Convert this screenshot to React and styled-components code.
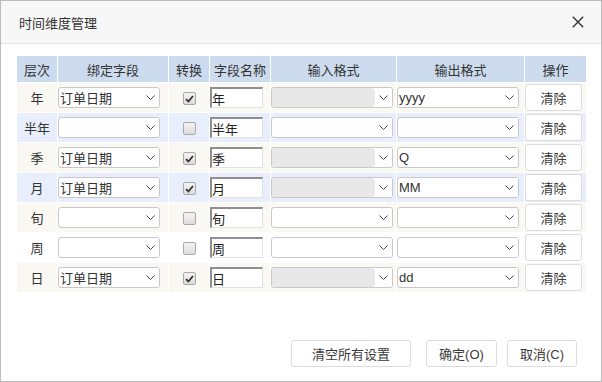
import React from 'react';
import styled, { createGlobalStyle } from 'styled-components';

const GlobalStyle = createGlobalStyle`
  html, body {
    margin: 0;
    padding: 0;
    background: #fff;
  }
  body {
    font-family: "Liberation Sans", "Noto Sans CJK SC", sans-serif;
    font-size: 13px;
    color: #333;
  }
`;

const rows = [
  { level: '年', field: '订单日期', convert: true, name: '年', output: 'yyyy', tone: 'beige' },
  { level: '半年', field: '', convert: false, name: '半年', output: '', tone: 'blue' },
  { level: '季', field: '订单日期', convert: true, name: '季', output: 'Q', tone: 'beige' },
  { level: '月', field: '订单日期', convert: true, name: '月', output: 'MM', tone: 'blue' },
  { level: '旬', field: '', convert: false, name: '旬', output: '', tone: 'beige' },
  { level: '周', field: '', convert: false, name: '周', output: '', tone: 'white' },
  { level: '日', field: '订单日期', convert: true, name: '日', output: 'dd', tone: 'beige' },
];

const toneColors = {
  beige: '#f9f8f3',
  blue: '#e8eefb',
  white: '#ffffff',
};

const Dialog = styled.div`
  width: 602px;
  height: 382px;
  box-sizing: border-box;
  border: 1px solid #bdbdbd;
  display: flex;
  flex-direction: column;
  background: #fff;
`;

const TitleBar = styled.div`
  height: 42px;
  flex: none;
  display: flex;
  align-items: center;
  justify-content: space-between;
  padding: 0 15px 0 18px;
  background: #f7f7f7;
  border-bottom: 1px solid #e6e6e6;
`;

const Title = styled.span`
  font-size: 13px;
  color: #333;
`;

const CloseButton = styled.button`
  border: none;
  background: transparent;
  padding: 0;
  width: 16px;
  height: 16px;
  display: flex;
  align-items: center;
  justify-content: center;
  cursor: pointer;
`;

const Body = styled.div`
  padding: 11px 15px 0 15px;
`;

const Table = styled.table`
  width: 100%;
  border-collapse: separate;
  border-spacing: 1px;
  table-layout: fixed;
`;

const HeadCell = styled.th`
  height: 26px;
  padding: 0;
  background: #cddbee;
  font-weight: normal;
  font-size: 13px;
  color: #333;
  text-align: center;
  width: ${p => p.$w}px;
`;

const Row = styled.tr`
  background: ${p => toneColors[p.$tone]};
`;

const Cell = styled.td`
  height: 29px;
  padding: 0;
  text-align: ${p => (p.$center ? 'center' : 'left')};
  vertical-align: middle;
`;

const SelectBox = styled.div`
  box-sizing: border-box;
  width: ${p => p.$w}px;
  height: 21px;
  border: 1px solid #c8c8c8;
  border-radius: 3px;
  background: #fff;
  display: flex;
  align-items: center;
  overflow: hidden;
`;

const SelectValue = styled.div`
  flex: 1;
  height: 100%;
  display: flex;
  align-items: center;
  padding-left: 1px;
  font-size: 13px;
  color: #333;
  background: ${p => (p.$disabled ? '#e8e8e8' : 'transparent')};
  border-radius: 0 4px 4px 0;
  white-space: nowrap;
`;

const Chevron = styled.div`
  width: 17px;
  height: 100%;
  flex: none;
  display: flex;
  align-items: center;
  justify-content: center;
  background: #fff;
`;

const Check = styled.span`
  display: inline-flex;
  align-items: center;
  justify-content: center;
  box-sizing: border-box;
  width: 13px;
  height: 13px;
  border: 1px solid #a9a9a9;
  border-radius: 2px;
  background: linear-gradient(#f4f4f4, #dcdcdc);
  vertical-align: middle;
`;

const NameInput = styled.input`
  box-sizing: border-box;
  width: 53px;
  height: 21px;
  margin: 0;
  padding: 0;
  border-top: 2px solid #8f8f8f;
  border-left: 2px solid #8f8f8f;
  border-right: 1px solid #e2e2e2;
  border-bottom: 1px solid #e2e2e2;
  background: #fff;
  font-family: inherit;
  font-size: 13px;
  color: #222;
  outline: none;
`;

const Button = styled.button`
  box-sizing: border-box;
  width: ${p => p.$w}px;
  height: ${p => p.$h}px;
  padding: 0;
  border: 1px solid #dcdcdc;
  border-radius: 3px;
  background: #fff;
  font-family: inherit;
  font-size: 13px;
  color: #3a3a3a;
  cursor: pointer;
`;

const Footer = styled.div`
  margin-top: auto;
  display: flex;
  justify-content: flex-end;
  align-items: center;
  padding: 0 24px 14px 0;
`;

const FooterGroup = styled.div`
  display: flex;
  gap: 10px;
  margin-left: 15px;
`;

const ChevronIcon = () => (
  <svg width="9" height="5" viewBox="0 0 9 5">
    <path d="M0.5 0.5 L4.5 4.5 L8.5 0.5" fill="none" stroke="#444" strokeWidth="1" />
  </svg>
);

const Select = ({ width, value, disabled }) => (
  <SelectBox $w={width}>
    <SelectValue $disabled={disabled}>{value}</SelectValue>
    <Chevron>
      <ChevronIcon />
    </Chevron>
  </SelectBox>
);

const Checkbox = ({ checked }) => (
  <Check>
    {checked && (
      <svg width="9" height="8" viewBox="0 0 9 8">
        <path d="M1 4.2 L3.4 6.5 L8 1" fill="none" stroke="#333" strokeWidth="1.8" />
      </svg>
    )}
  </Check>
);

const columns = [
  ['层次', 40],
  ['绑定字段', 110],
  ['转换', 40],
  ['字段名称', 60],
  ['输入格式', 125],
  ['输出格式', 127],
  ['操作', 61],
];

export default function App() {
  return (
    <>
      <GlobalStyle />
      <Dialog>
        <TitleBar>
          <Title>时间维度管理</Title>
          <CloseButton>
            <svg width="12" height="12" viewBox="0 0 12 12">
              <path d="M0.8 0.8 L11.2 11.2 M11.2 0.8 L0.8 11.2" stroke="#333" strokeWidth="1.4" />
            </svg>
          </CloseButton>
        </TitleBar>
        <Body>
          <Table>
            <thead>
              <tr>
                {columns.map(([label, w]) => (
                  <HeadCell key={label} $w={w}>{label}</HeadCell>
                ))}
              </tr>
            </thead>
            <tbody>
              {rows.map(r => (
                <Row key={r.level} $tone={r.tone}>
                  <Cell $center>{r.level}</Cell>
                  <Cell>
                    <Select width={102} value={r.field} />
                  </Cell>
                  <Cell $center>
                    <Checkbox checked={r.convert} />
                  </Cell>
                  <Cell>
                    <NameInput defaultValue={r.name} />
                  </Cell>
                  <Cell>
                    <Select width={122} value="" disabled={r.convert} />
                  </Cell>
                  <Cell>
                    <Select width={122} value={r.output} />
                  </Cell>
                  <Cell>
                    <Button $w={57} $h={27}>清除</Button>
                  </Cell>
                </Row>
              ))}
            </tbody>
          </Table>
        </Body>
        <Footer>
          <Button $w={120} $h={27}>清空所有设置</Button>
          <FooterGroup>
            <Button $w={71} $h={27}>确定(O)</Button>
            <Button $w={70} $h={27}>取消(C)</Button>
          </FooterGroup>
        </Footer>
      </Dialog>
    </>
  );
}
